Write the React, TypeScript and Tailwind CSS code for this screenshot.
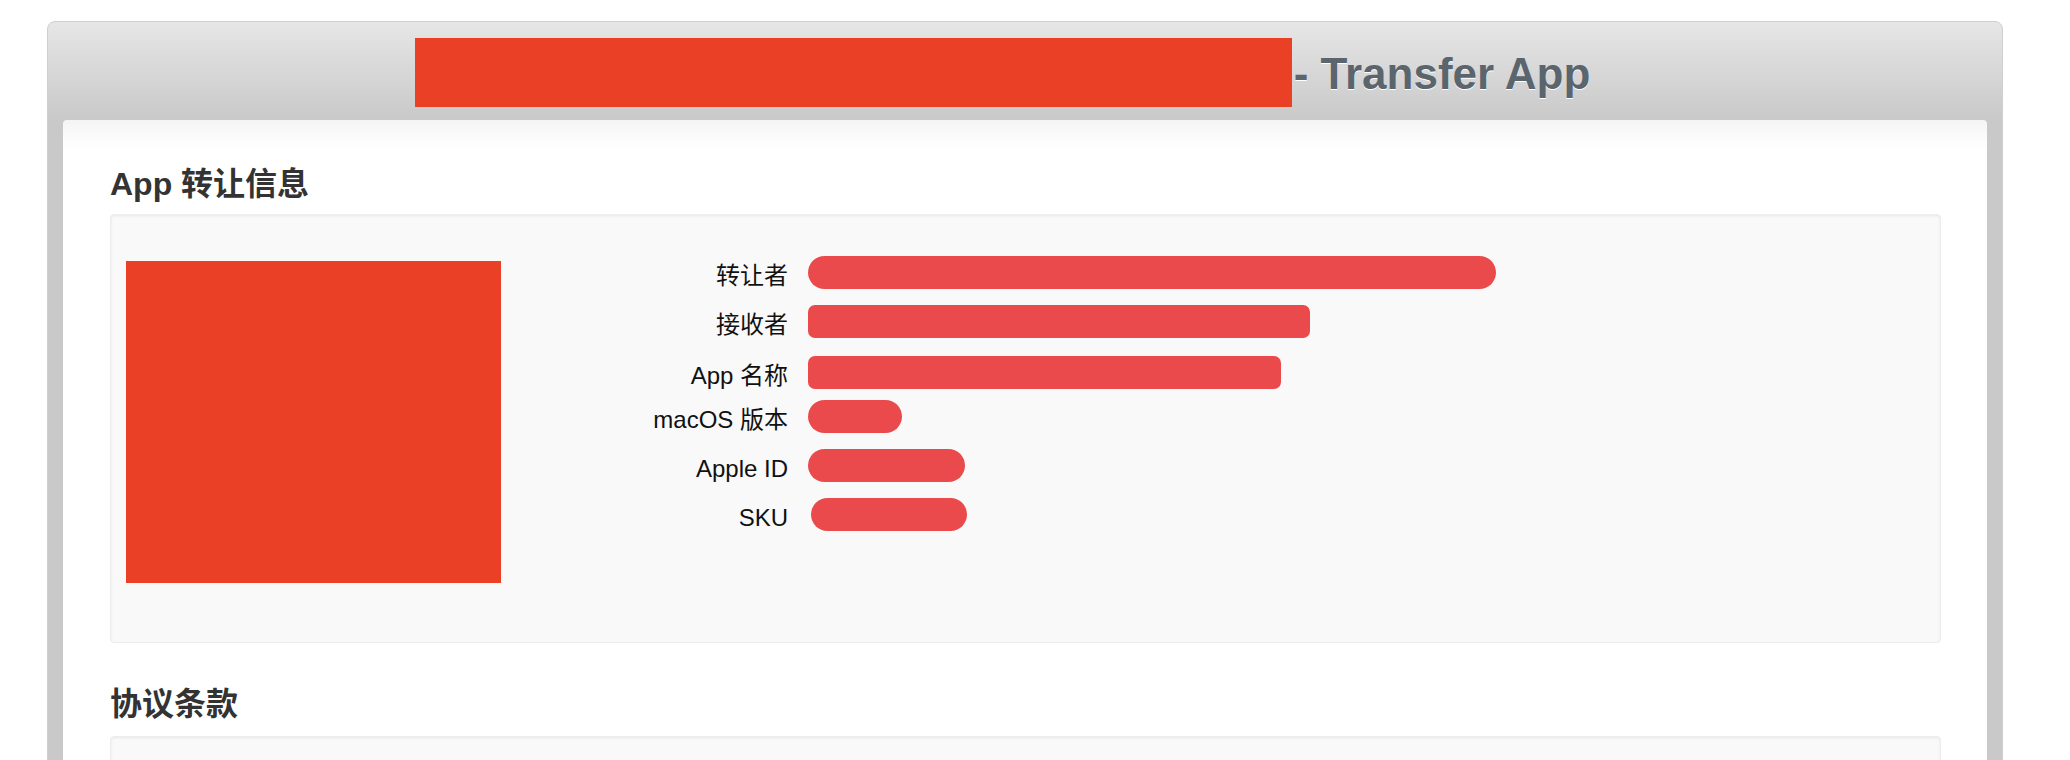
const rows = [
  { label: '转让者', w: 'w-[688px] ml-[20px]', shape: 'rounded-full', mt: 'mt-0' },
  { label: '接收者', w: 'w-[502px] ml-[20px]', shape: 'rounded-[7px]', mt: 'mt-[16px]' },
  { label: 'App 名称', w: 'w-[473px] ml-[20px]', shape: 'rounded-[7px]', mt: 'mt-[18px]' },
  { label: 'macOS 版本', w: 'w-[94px] ml-[20px]', shape: 'rounded-full', mt: 'mt-[11px]' },
  { label: 'Apple ID', w: 'w-[157px] ml-[20px]', shape: 'rounded-full', mt: 'mt-[16px]' },
  { label: 'SKU', w: 'w-[156px] ml-[23px]', shape: 'rounded-full', mt: 'mt-[16px]' },
];

const App = () => {
  return (
    <div className="h-[760px] overflow-hidden bg-white px-[47px] pt-[21px] font-['Liberation_Sans','Noto_Sans_CJK_SC',sans-serif]">
      <div className="w-[1956px] rounded-t-[8px] border border-[#cfcfcf] bg-[linear-gradient(#e6e6e6_0px,#c9c9c9_98px)] px-[15px]">
        {/* window title */}
        <header className="-mx-[15px] flex h-[98px] items-start justify-center pr-[45px] pt-[16px]">
          <div className="h-[69px] w-[877px] bg-[#ea4026]" />
          <span className="ml-[2px] mt-[14px] text-[44px] font-bold leading-[44px] text-[#5b656e] [text-shadow:0_1px_0_#fff]">
            - Transfer App
          </span>
        </header>

        <main className="rounded-t-[4px] bg-[linear-gradient(#f4f4f4_0px,#fff_30px)] pl-[47px] pr-[46px] pt-[45px] pb-[40px]">
          <h2 className="mb-[11px] text-[32px] font-bold leading-[38px] text-[#333]">App 转让信息</h2>

          <section className="flex h-[429px] items-start rounded-[4px] border border-[#ededed] bg-[#f9f9f9] pl-[15px] pt-[41px] shadow-[inset_0_1px_3px_rgba(0,0,0,0.07)]">
            <div className="mt-[5px] h-[322px] w-[375px] shrink-0 bg-[#ea4026]" />
            <div className="flex flex-col">
              {rows.map((r) => (
                <div key={r.label} className={`flex h-[33px] items-start ${r.mt}`}>
                  <span className="w-[287px] shrink-0 pt-[5px] text-right text-[24px] leading-[30px] text-[#111]">{r.label}</span>
                  <div className={`h-[33px] bg-[#ea4a4c] ${r.w} ${r.shape}`} />
                </div>
              ))}
            </div>
          </section>

          <h2 className="mb-[13px] mt-[42px] text-[32px] font-bold leading-[38px] text-[#333]">协议条款</h2>

          <section className="h-[300px] rounded-[4px] border border-[#ededed] bg-[#f9f9f9] shadow-[inset_0_1px_3px_rgba(0,0,0,0.07)]" />
        </main>
      </div>
    </div>
  );
};

export default App;
